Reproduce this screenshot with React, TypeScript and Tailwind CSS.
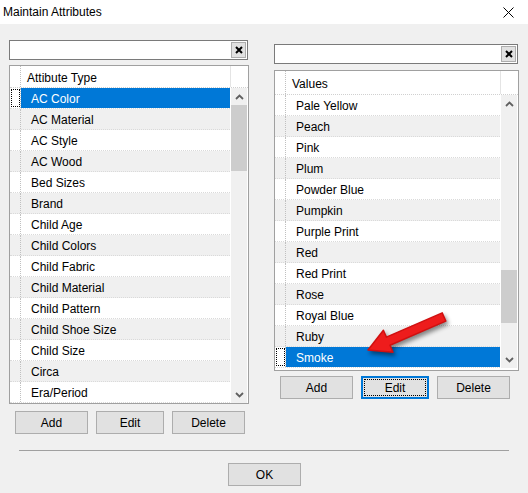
import React from 'react';

const attributeTypes = [
  'AC Color', 'AC Material', 'AC Style', 'AC Wood', 'Bed Sizes', 'Brand', 'Child Age', 'Child Colors',
  'Child Fabric', 'Child Material', 'Child Pattern', 'Child Shoe Size', 'Child Size', 'Circa', 'Era/Period',
];

const values = [
  'Pale Yellow', 'Peach', 'Pink', 'Plum', 'Powder Blue', 'Pumpkin', 'Purple Print', 'Red', 'Red Print',
  'Rose', 'Royal Blue', 'Ruby', 'Smoke',
];

const Chevron = ({ up }: { up?: boolean }) => (
  <svg width="9" height="6" viewBox="0 0 9 6">
    <polyline
      points={up ? '1,5 4.5,1.5 8,5' : '1,1 4.5,4.5 8,1'}
      fill="none"
      stroke="#606060"
      strokeWidth="1.8"
    />
  </svg>
);

const SearchBox = ({ width }: { width: string }) => (
  <div className={`${width} h-[20px] bg-white border border-[#7a7a7a] flex items-center justify-end pr-px`}>
    <div className="w-[15px] h-[16px] bg-[#e1e1e1] border border-[#adadad] flex items-center justify-center">
      <svg width="8" height="8" viewBox="0 0 8 8">
        <path d="M1 1 L7 7 M7 1 L1 7" stroke="#000" strokeWidth="2" />
      </svg>
    </div>
  </div>
);

const Grid = ({ header, items, selected, width, headerH, thumbTop, thumbH, extraPad }: {
  header: string, items: string[], selected: number, width: string, headerH: string, thumbTop: string, thumbH: string, extraPad?: boolean
}) => (
  <div className={`${width} border border-[#a0a0a0] bg-white flex flex-col ${extraPad ? 'pb-[2px]' : ''}`}>
    {/* header row */}
    <div className={`flex ${headerH} border-b border-dotted border-[#d0d0d0]`}>
      <div className="w-[11px] border-r border-dotted border-[#c0c0c0]" />
      <div className="flex-1 flex items-center pl-[6px] pt-[2px]">{header}</div>
      <div className="w-[18px] border-l border-[#e4e4e4]" />
    </div>
    {/* body */}
    <div className="flex">
      <div className="flex-1 flex flex-col">
        {items.map((item, i) => {
          const sel = i === selected;
          const bg = i % 2 === 1 ? 'bg-[#f0f0f0]' : 'bg-white';
          return (
            <div key={item} className={`flex h-[21px] border-b border-dotted border-[#dadada] ${bg}`}>
              <div className="w-[11px] border-r border-dotted border-[#c0c0c0] pl-px py-px">
                {sel && <div className="w-[9px] h-full border border-dotted border-black" />}
              </div>
              <div className={`flex-1 flex items-center pl-[10px] pt-[2px] ${sel ? 'bg-[#0078d7] text-white' : ''}`}>
                {item}
              </div>
            </div>
          );
        })}
      </div>
      <div className="w-[18px] px-px flex">
        <div className="flex-1 bg-[#f0f0f0] flex flex-col">
          <div className="h-[17px] flex items-center justify-center"><Chevron up /></div>
          <div className="flex-1">
            <div className={`${thumbTop} ${thumbH} bg-[#cdcdcd]`} />
          </div>
          <div className="h-[17px] flex items-center justify-center"><Chevron /></div>
        </div>
      </div>
    </div>
  </div>
);

const Btn = ({ label, width, focused }: { label: string, width: string, focused?: boolean }) => (
  <button
    className={`relative ${width} h-[23px] bg-[#e1e1e1] border flex items-center justify-center pt-px text-[12px] text-black ${
      focused ? 'border-[#0078d7] shadow-[inset_0_0_0_1px_#0078d7]' : 'border-[#adadad]'
    }`}
  >
    {focused && <span className="absolute inset-[2px] border border-dotted border-black" />}
    {label}
  </button>
);

export default function App() {
  return (
    <div className="relative w-[528px] h-[493px] bg-[#f0f0f0] flex flex-col text-[12px] text-black overflow-hidden" style={{ fontFamily: '"Liberation Sans", Arial, sans-serif' }}>
      {/* title bar */}
      <div className="h-[24px] bg-white flex items-center justify-between pl-[3px] pr-[14px] shrink-0">
        <span>Maintain Attributes</span>
        <svg width="11" height="11" viewBox="0 0 11 11">
          <path d="M0.5 0.5 L10.5 10.5 M10.5 0.5 L0.5 10.5" stroke="#000" strokeWidth="1" />
        </svg>
      </div>

      {/* panels */}
      <div className="flex items-start pl-[9px] h-[410px] shrink-0">
        <div className="flex flex-col mt-[16px]">
          <SearchBox width="w-[239px]" />
          <div className="mt-[5px]">
            <Grid header="Attibute Type" items={attributeTypes} selected={0} width="w-[240px]" headerH="h-[22px]" thumbTop="mt-0" thumbH="h-[66px]" />
          </div>
          <div className="flex gap-[8px] pl-[6px] mt-[7px]">
            <Btn label="Add" width="w-[73px]" />
            <Btn label="Edit" width="w-[68px]" />
            <Btn label="Delete" width="w-[73px]" />
          </div>
        </div>

        <div className="flex flex-col mt-[20px] ml-[25px]">
          <SearchBox width="w-[244px]" />
          <div className="mt-[6px]">
            <Grid header="Values" items={values} selected={12} width="w-[245px]" headerH="h-[24px]" thumbTop="mt-[158px]" thumbH="h-[53px]" extraPad />
          </div>
          <div className="flex gap-[8px] pl-[6px] mt-[5px]">
            <Btn label="Add" width="w-[73px]" />
            <Btn label="Edit" width="w-[68px]" focused />
            <Btn label="Delete" width="w-[73px]" />
          </div>
        </div>
      </div>

      {/* separator + OK */}
      <div className="ml-[19px] mt-[16px] w-[490px] h-px bg-[#a0a0a0]" />
      <div className="ml-[228px] mt-[12px]">
        <Btn label="OK" width="w-[73px]" />
      </div>

      {/* red annotation arrow */}
      <svg className="absolute left-[360px] top-[310px] drop-shadow-[2px_3px_2px_rgba(0,0,0,0.45)]" width="92" height="50" viewBox="0 0 92 50">
        <polygon
          points="8,40 33,42.2 30,35.3 85.8,11.1 82.2,2.9 26.4,27.1 23.4,20.2"
          fill="#ee1c1c"
          stroke="#d01010"
          strokeWidth="1.5"
          strokeLinejoin="round"
        />
      </svg>
    </div>
  );
}
